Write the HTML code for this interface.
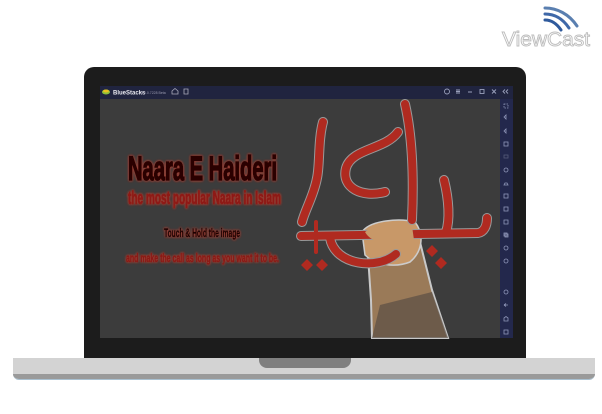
<!DOCTYPE html>
<html><head><meta charset="utf-8"><style>
*{margin:0;padding:0;box-sizing:border-box}
body{width:602px;height:414px;background:#fff;position:relative;overflow:hidden;font-family:"Liberation Sans",sans-serif}
.abs{position:absolute}
</style></head><body>
<svg class="abs" style="left:495px;top:0" width="107" height="55">
 <g fill="none" stroke-linecap="round">
  <path d="M50,8 C62,8 74,14 82,26" stroke="#5a7fb0" stroke-width="3"/>
  <path d="M50,14 C60,14 68,19 74,28" stroke="#3f68a8" stroke-width="3"/>
  <path d="M50,20 C57,20 62,24 66,30" stroke="#2f5a9c" stroke-width="3"/>
 </g>
 <text x="7" y="46" font-size="20" fill="#fff" stroke="#bdbdbd" stroke-width="0.9" font-family="Liberation Sans" textLength="88" lengthAdjust="spacingAndGlyphs">ViewCast</text>
</svg>
<div class="abs" style="left:84px;top:67px;width:442px;height:294px;background:#1c1c1c;border-radius:10px 10px 0 0"></div>
<div class="abs" style="left:13px;top:358px;width:582px;height:22px;background:#d3d3d3;border-radius:0 0 6px 6px;overflow:hidden;border-bottom:1px solid #a9c0d0">
 <div class="abs" style="left:0;top:16px;width:582px;height:6px;background:#9a9a9a"></div>
</div>
<div class="abs" style="left:259px;top:358px;width:92px;height:10px;background:#7f7f7f;border-radius:0 0 8px 8px"></div>
<svg class="abs" style="left:0;top:0" width="602" height="414">
 <rect x="100" y="86" width="413" height="13" fill="#20243f"/>
 <rect x="500" y="99" width="13" height="239" fill="#23284c"/>
 <rect x="100" y="99" width="400" height="239" fill="#3c3c3c"/>
 <ellipse cx="106" cy="92" rx="4" ry="2.5" fill="#8cbf3a"/>
 <ellipse cx="106" cy="91" rx="3" ry="1.5" fill="#e8c020"/>
 <text x="113" y="94.5" font-size="6" font-weight="bold" fill="#e8e8f0">BlueStacks</text>
 <text x="141" y="94" font-size="3.5" fill="#9a9ab0">5.0.0.7228 Beta</text>
 <path d="M172,94 v-3 l3,-2.5 l3,2.5 v3 z M184,89h4v5h-4z" fill="none" stroke="#aab" stroke-width="0.8"/>
 <g fill="none" stroke="#9aa0bb" stroke-width="0.9">
  <circle cx="447" cy="91.5" r="2.5"/>
  <path d="M456,90h4M456,91.5h4M456,93h4M468,92h4"/>
  <rect x="480" y="89.5" width="4" height="4"/>
  <path d="M492,89.5l4,4M496,89.5l-4,4M505,89.5l-2,2l2,2M508,89.5l-2,2l2,2"/>
 </g>
 <g fill="none" stroke="#8f96b8" stroke-width="0.8">
  <rect x="504" y="104" width="4" height="4" stroke-dasharray="1.5 1"/>
  <path d="M504,117l2,-2v4z M504,131l2,-2v4z"/>
  <rect x="504" y="142" width="4" height="4"/>
  <rect x="504" y="155" width="4" height="3" stroke="#555a78"/>
  <circle cx="506" cy="170" r="2"/>
  <path d="M504,185h4l-1,-2h-2z"/>
  <rect x="504" y="194" width="4" height="4"/>
  <rect x="504" y="207" width="4" height="4"/>
  <path d="M504,220h4v4h-4z"/>
  <rect x="504" y="233" width="3" height="3"/><rect x="505" y="234" width="3" height="3"/>
  <circle cx="506" cy="248" r="2"/><circle cx="506" cy="261" r="2"/>
  <circle cx="506" cy="292" r="2"/>
  <path d="M504,305h4M504,305l2,-1.5M504,305l2,1.5"/>
  <path d="M504,321v-3l2,-1.5l2,1.5v3z"/>
  <rect x="504" y="330" width="4" height="4"/>
 </g>
 <defs><filter id="g" x="-10%" y="-30%" width="120%" height="160%"><feGaussianBlur in="SourceAlpha" stdDeviation="1.3" result="b"/><feFlood flood-color="#a04035"/><feComposite in2="b" operator="in" result="c"/><feMerge><feMergeNode in="c"/><feMergeNode in="c"/><feMergeNode in="SourceGraphic"/></feMerge></filter></defs>
 <g font-family="Liberation Sans, sans-serif" font-weight="bold" filter="url(#g)">
  <text x="128" y="180" font-size="34" fill="#2a0404" stroke="#2a0404" stroke-width="1.5" textLength="149" lengthAdjust="spacingAndGlyphs">Naara E Haideri</text>
  <text x="128" y="204" font-size="18" fill="#8e1a14" stroke="#8e1a14" stroke-width="0.8" textLength="153" lengthAdjust="spacingAndGlyphs">the most popular Naara in Islam</text>
  <text x="164" y="237" font-size="12" fill="#1e0606" stroke="#1e0606" stroke-width="0.5" textLength="76" lengthAdjust="spacingAndGlyphs">Touch &amp; Hold the image</text>
  <text x="126" y="262" font-size="12" fill="#8a1a14" stroke="#8a1a14" stroke-width="0.5" textLength="153" lengthAdjust="spacingAndGlyphs">and make the call as long as you want it to be.</text>
 </g>
 <path d="M368,256 L420,242 L432,290 L448,338 L372,338 L371,300 Z" fill="#9a7a58" stroke="#c8c8c8" stroke-width="2"/>
 <path d="M380,305 L432,292 L448,338 L372,338 Z" fill="#5a4e44" opacity="0.7"/>
 <path d="M362,232 C370,220 400,218 415,222 C425,235 422,252 410,262 C395,268 375,265 365,255 Z" fill="#c89868" stroke="#ccc" stroke-width="1.5"/>
 <g fill="none" stroke-linecap="round" stroke-linejoin="round">
  <g stroke="#999" stroke-width="10">
   <path d="M405,104 C412,135 414,175 412,220"/>
   <path d="M398,132 C385,150 352,148 346,168 C341,188 362,198 385,192"/>
   <path d="M323,122 C318,140 320,165 317,178 C314,195 305,210 302,222"/>
   <path d="M444,180 C449,200 450,220 446,232"/>
   <path d="M301,236 L478,233 C484,232 487,226 487,218"/>
   <path d="M330,238 C335,266 378,270 396,254"/>
  </g>
  <g stroke="#b02a20" stroke-width="8">
   <path d="M405,104 C412,135 414,175 412,220"/>
   <path d="M398,132 C385,150 352,148 346,168 C341,188 362,198 385,192"/>
   <path d="M323,122 C318,140 320,165 317,178 C314,195 305,210 302,222"/>
   <path d="M444,180 C449,200 450,220 446,232"/>
   <path d="M301,236 L478,233 C484,232 487,226 487,218"/>
   <path d="M330,238 C335,266 378,270 396,254"/>
  </g>
  <path d="M316,222 L316,252" stroke="#b02a20" stroke-width="4"/>
 </g>
 <path d="M412,226 C395,222 375,224 365,232 C372,245 395,246 414,240 Z" fill="#c89868"/>
 <g fill="#b02a20">
  <path d="M432,245 l6,6 l-6,6 l-6,-6z M441,257 l6,6 l-6,6 l-6,-6z M307,259 l6,6 l-6,6 l-6,-6z M322,259 l6,6 l-6,6 l-6,-6z"/>
 </g>
</svg>
</body></html>
